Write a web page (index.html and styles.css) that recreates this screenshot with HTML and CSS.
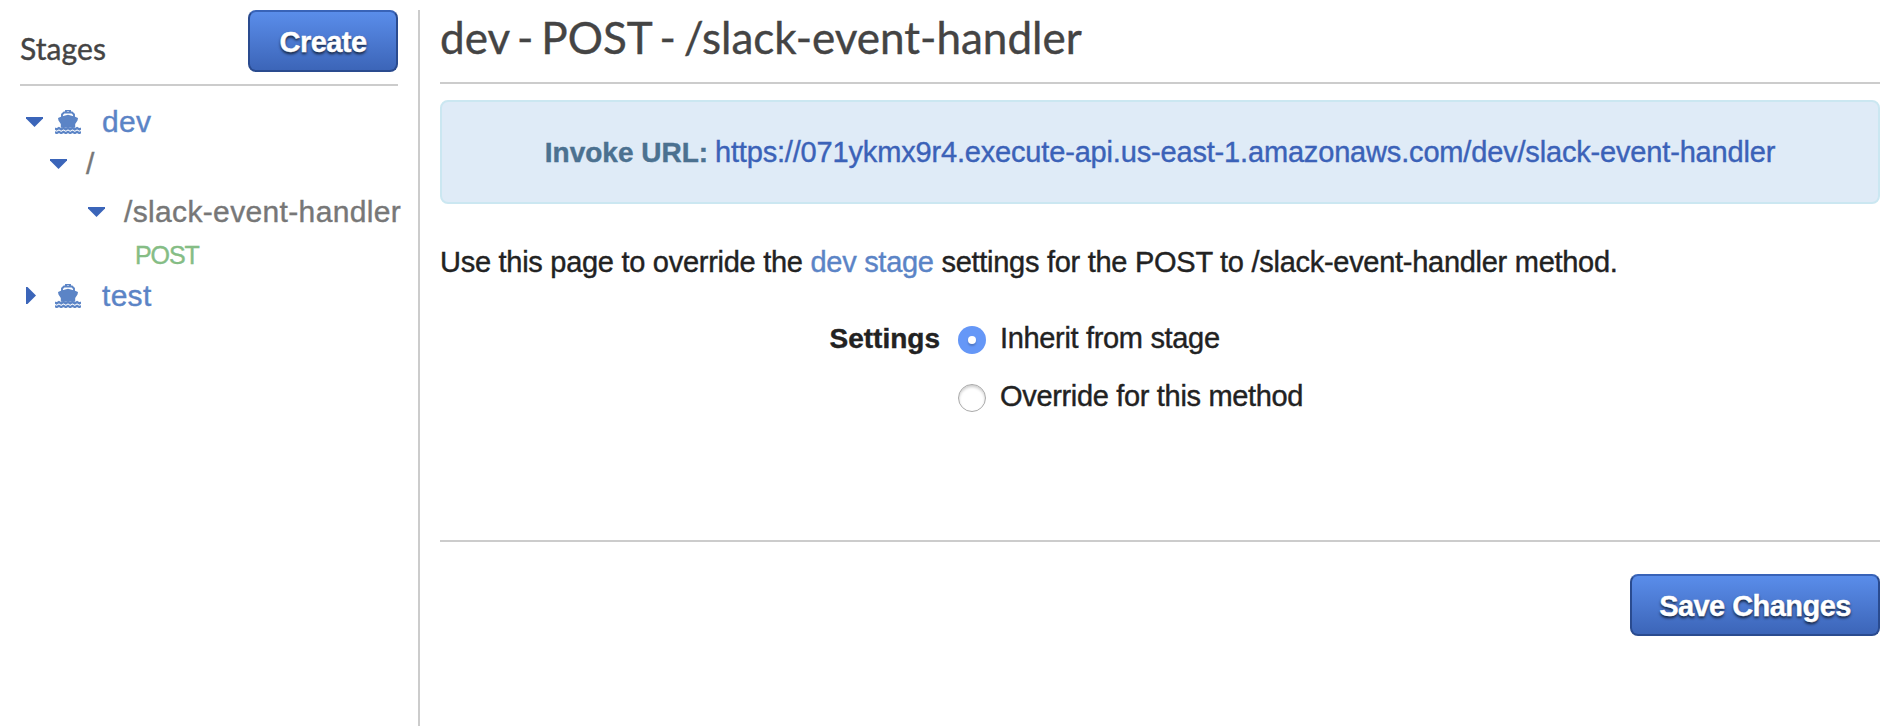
FILE: index.html
```html
<!DOCTYPE html>
<html lang="en">
<head>
<meta charset="utf-8">
<title>Stages</title>
<link rel="stylesheet" href="styles.css">
</head>
<body>
<svg class="defs" width="0" height="0" aria-hidden="true">
  <symbol id="ship" viewBox="0 0 26 24">
    <path d="M11 2V0h4v2M7 8V4.500L9 2.500h8l2 2V8" fill="none" stroke="currentColor" stroke-width="1.900"/>
    <path d="M13 4.800L19.500 6.500 23 8 22.500 10.500 20.200 14v3.800H5.800V14L3.500 10.500 3 8 6.500 6.500z" fill="currentColor"/>
    <path d="M0 18.300l1.600 1.100 2.300-1.400 2.300 1.400 2.300-1.400 2.300 1.400L13 18l2.200 1.400 2.300-1.400 2.300 1.400 2.300-1.400 2.300 1.400 1.600-1.100M0 22l1.600 1.100 2.300-1.400 2.300 1.400 2.300-1.400 2.300 1.400L13 21.700l2.200 1.400 2.300-1.400 2.300 1.400 2.300-1.400 2.300 1.400 1.600-1.100" fill="none" stroke="currentColor" stroke-width="2.200"/>
  </symbol>
</svg>
<div class="layout">
  <aside class="sidebar">
    <header class="sidebar-head">
      <h2 class="sidebar-title">Stages</h2>
      <button class="button create">Create</button>
    </header>
    <div class="tree">
      <div class="row stage">
        <svg class="caret" viewBox="0 0 17 10"><path d="M0 0h17v1.500L8.500 10 0 1.500z"/></svg>
        <svg class="ship"><use href="#ship"/></svg>
        <span>dev</span>
      </div>
      <div class="row root">
        <svg class="caret" viewBox="0 0 17 10"><path d="M0 0h17v1.500L8.500 10 0 1.500z"/></svg>
        <span>/</span>
      </div>
      <div class="row resource">
        <svg class="caret" viewBox="0 0 17 10"><path d="M0 0h17v1.500L8.500 10 0 1.500z"/></svg>
        <span>/slack-event-handler</span>
      </div>
      <div class="row method"><span>POST</span></div>
      <div class="row stage last">
        <svg class="caret closed" viewBox="0 0 10 17"><path d="M0 0h1.500L10 8.500 1.500 17H0z"/></svg>
        <svg class="ship"><use href="#ship"/></svg>
        <span>test</span>
      </div>
    </div>
  </aside>
  <main class="main">
    <h1 class="title">dev - POST - /slack-event-handler</h1>
    <div class="invoke"><strong>Invoke URL:</strong> <a class="url">https://071ykmx9r4.execute-api.us-east-1.amazonaws.com/dev/slack-event-handler</a></div>
    <p class="intro">Use this page to override the <a class="link">dev stage</a> settings for the POST to /slack-event-handler method.</p>
    <div class="settings">
      <strong class="settings-label">Settings</strong>
      <div class="options">
        <label class="option"><span class="radio checked"></span><span class="inherit">Inherit from stage</span></label>
        <label class="option"><span class="radio"></span><span class="override">Override for this method</span></label>
      </div>
    </div>
    <footer class="actions"><button class="button save">Save Changes</button></footer>
  </main>
</div>
</body>
</html>
```
FILE: styles.css
```css
* { box-sizing: border-box; }
body {
  margin: 0;
  height: 726px;
  overflow: hidden;
  background: #fff;
  color: #222;
  font-family: "Liberation Sans", Arial, sans-serif;
  font-size: 28px;
  -webkit-text-stroke: .4px currentColor;
}
.defs { display: block; }
.layout { display: flex; height: 726px; padding: 10px 18px 0 20px; }
.sidebar { width: 400px; border-right: 2px solid #ccc; flex: none; }
.sidebar-head {
  display: flex;
  justify-content: space-between;
  width: 378px;
  height: 76px;
  border-bottom: 2px solid #ccc;
}
.sidebar-title {
  margin: 0;
  padding-top: 20px;
  font: 400 30px/36px Lato, sans-serif;
  color: #444;
  letter-spacing: .1px;
}
.button {
  height: 62px;
  padding: 2px 0 0;
  border: 2px solid #2a4b8f;
  border-top-color: #3863b8;
  border-radius: 8px;
  background: linear-gradient(#5a8dea, #3c65b8);
  color: #fff;
  font: bold 29px/56px "Liberation Sans", Arial, sans-serif;
  letter-spacing: -.55px;
  text-shadow: 0 2px 3px rgba(0, 0, 0, .75);
  -webkit-text-stroke: .4px #fff;
  white-space: nowrap;
}
.create { width: 150px; }
.save { width: 250px; }
.tree { padding-top: 14px; font-size: 30px; color: #777; }
.row { display: flex; align-items: center; height: 43px; white-space: nowrap; }
.caret { width: 17px; height: 10px; fill: #3b65b9; flex: none; }
.caret.closed { width: 10px; height: 17px; margin-right: 7px; }
.ship { width: 26px; height: 24px; margin: 0 21px 0 12px; flex: none; }
.stage { padding-left: 6px; color: #5b84c6; letter-spacing: .3px; }
.root { height: 41px; padding-left: 30px; gap: 19px; }
.resource { height: 55px; padding-left: 68px; gap: 19px; letter-spacing: .35px; }
.method { height: 32px; padding-left: 115px; font-size: 25px; color: #85bd85; letter-spacing: -1.1px; }
.last { height: 49px; }
.main { flex: 1; padding-left: 20px; min-width: 0; }
.title {
  margin: 0;
  height: 74px;
  border-bottom: 2px solid #ccc;
  font: 400 44px/54px Lato, sans-serif;
  word-spacing: -3.3px;
  color: #444;
}
.invoke {
  height: 104px;
  margin-top: 16px;
  border: 2px solid #cbe7f1;
  border-radius: 8px;
  background: #dfebf7;
  color: #4b7190;
  text-align: center;
  line-height: 101px;
  white-space: nowrap;
}
.invoke strong { margin-right: -1px; }
.url { color: #3b62b8; font-size: 29px; letter-spacing: -.17px; }
.intro { margin: 42px 0 0; font-size: 29px; line-height: 32px; letter-spacing: -.28px; white-space: nowrap; }
.link { color: #5b84c6; }
.settings { display: flex; height: 262px; padding-top: 44px; }
.settings-label { width: 500px; text-align: right; line-height: 33px; }
.options { display: flex; flex-direction: column; gap: 26px; padding-left: 18px; }
.option { display: flex; gap: 14px; font-size: 29px; line-height: 32px; letter-spacing: -.33px; white-space: nowrap; }
.radio {
  width: 28px;
  height: 28px;
  margin-top: 4px;
  border-radius: 50%;
  border: 1px solid #aaa;
  box-shadow: inset 0 2px 3px rgba(0, 0, 0, .2);
  background: #fff;
}
.checked {
  display: grid;
  place-items: center;
  border: 0;
  background: #6597f7;
  box-shadow: none;
}
.checked::after {
  content: "";
  width: 8px;
  height: 8px;
  border-radius: 50%;
  background: #fff;
  box-shadow: 0 2px 2px rgba(0, 0, 0, .2);
}
.actions { border-top: 2px solid #ccc; padding-top: 32px; text-align: right; }
```
